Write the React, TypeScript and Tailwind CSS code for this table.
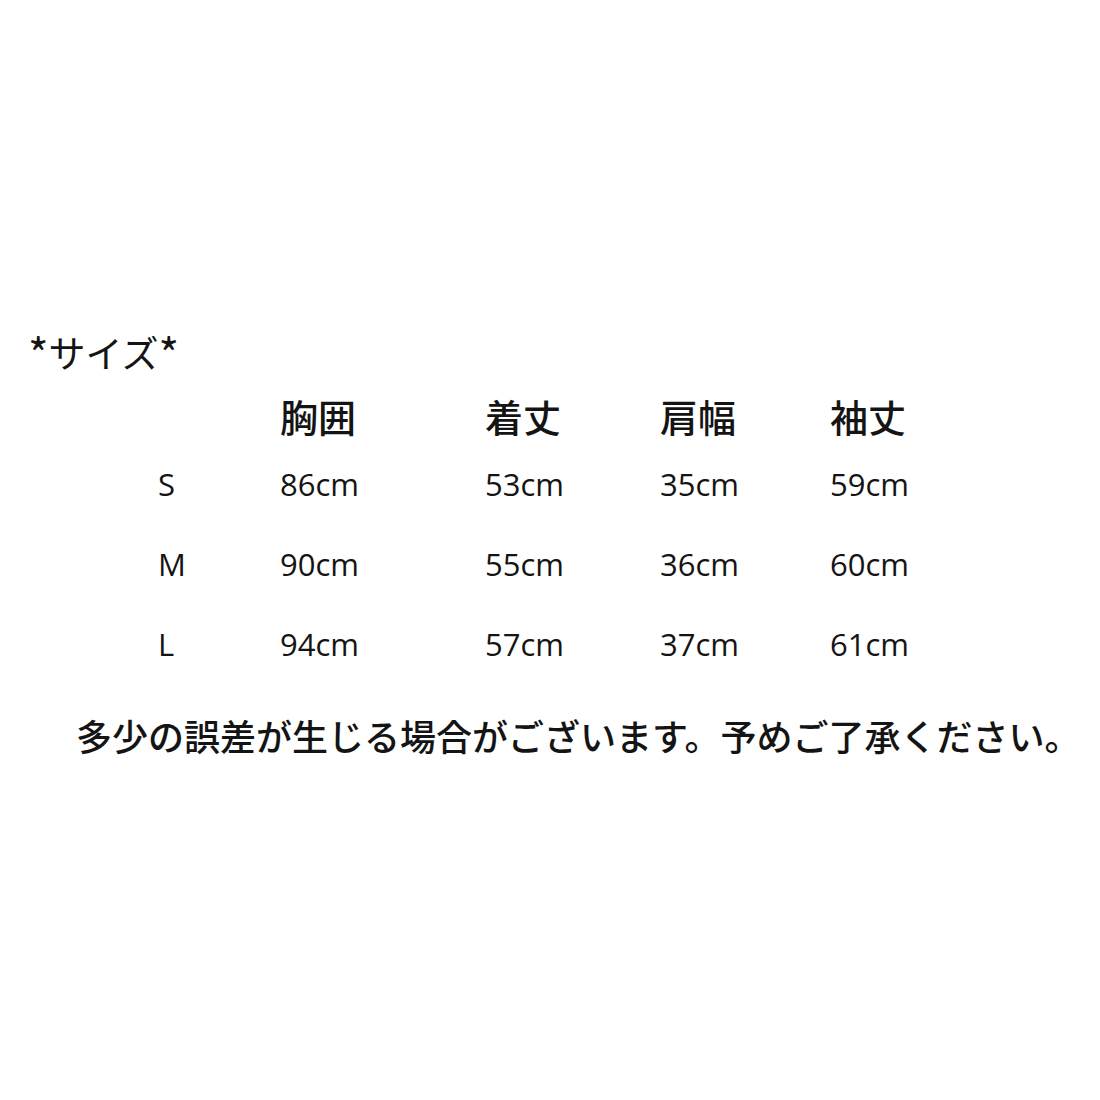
const rows = [
  { size: "S", values: ["86cm", "53cm", "35cm", "59cm"] },
  { size: "M", values: ["90cm", "55cm", "36cm", "60cm"] },
  { size: "L", values: ["94cm", "57cm", "37cm", "61cm"] },
];

const headers = ["胸囲", "着丈", "肩幅", "袖丈"];

const cols = "grid grid-cols-[122px_205px_175px_170px_1fr] items-center";

export default function App() {
  return (
    <div className="h-[1100px] w-[1100px] bg-white font-['Open_Sans','Noto_Sans_CJK_JP',sans-serif] text-[#141414]">
      <div className="pt-[332px]">
        <div className="flex h-[40px] items-center pl-[28px] font-['Noto_Sans_CJK_JP',sans-serif] text-[37px] leading-none">
          <span className="text-[44px]">*</span>
          サイズ
          <span className="text-[44px]">*</span>
        </div>

        <div className={`${cols} mt-[15px] h-[50px] pl-[158px] font-['Noto_Sans_CJK_JP',sans-serif] text-[38px] font-medium`}>
          <span />
          {headers.map((h) => (
            <span key={h}>{h}</span>
          ))}
        </div>

        <div className="mt-[7px]">
          {rows.map((r) => (
            <div key={r.size} className={`${cols} h-[80px] pl-[158px] text-[31px]`}>
              <span>{r.size}</span>
              {r.values.map((v) => (
                <span key={v}>{v}</span>
              ))}
            </div>
          ))}
        </div>

        <div className="mt-[26px] flex h-[50px] items-center pl-[76px] font-['Noto_Sans_CJK_JP',sans-serif] text-[36px] font-medium leading-none">
          多少の誤差が生じる場合がございます。予めご了承ください。
        </div>
      </div>
    </div>
  );
}
